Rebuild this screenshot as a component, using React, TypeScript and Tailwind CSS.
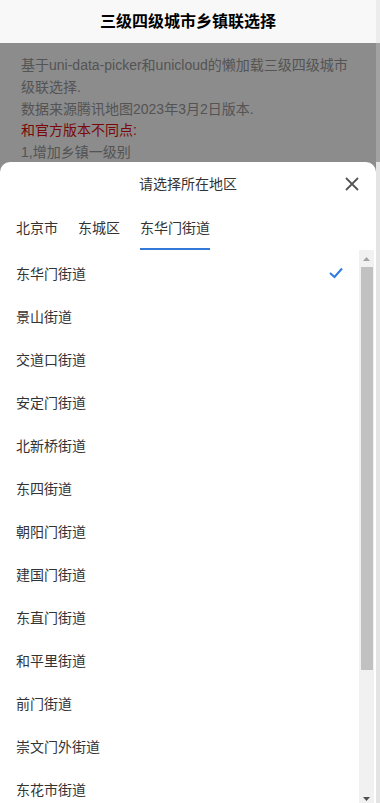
import React from "react";

const items = [
  "东华门街道",
  "景山街道",
  "交道口街道",
  "安定门街道",
  "北新桥街道",
  "东四街道",
  "朝阳门街道",
  "建国门街道",
  "东直门街道",
  "和平里街道",
  "前门街道",
  "崇文门外街道",
  "东花市街道",
];

const font = { fontFamily: '"Liberation Sans", "Noto Sans CJK SC", sans-serif' };

export default function App() {
  return (
    <div className="w-[380px] h-[803px] overflow-hidden flex bg-white" style={font}>
      <div className="w-[376px] h-full flex flex-col">
        <div className="h-[43px] shrink-0 bg-[#f8f8f8] flex items-center justify-center text-[16px] font-bold text-black">
          三级四级城市乡镇联选择
        </div>
        <div className="relative flex-1">
          <div className="pt-[12px] px-[21px] text-[14px] leading-[21.75px] text-[#999]">
            <div className="whitespace-nowrap">基于uni-data-picker和unicloud的懒加载三级四级城市</div>
            <div>级联选择.</div>
            <div>数据来源腾讯地图2023年3月2日版本.</div>
            <div className="text-[#e01010]">和官方版本不同点:</div>
            <div>1,增加乡镇一级别</div>
            <div>2,支持三级和四级选择</div>
          </div>
          <div className="absolute inset-0 bg-black/[0.45]" />
          <div className="absolute top-[119px] left-0 right-0 bottom-0 bg-white rounded-t-[10px] flex flex-col overflow-hidden">
            <div className="h-[44px] shrink-0 relative flex items-center justify-center text-[14px] text-[#333]">
              请选择所在地区
              <svg className="absolute right-[17px] top-[15px]" width="14" height="14" viewBox="0 0 14 14">
                <path d="M1 1 L13 13 M13 1 L1 13" stroke="#555" strokeWidth="1.8" fill="none" />
              </svg>
            </div>
            <div className="flex px-[6px] shrink-0">
              <div className="mx-[10px] pt-[12px] pb-[12px] text-[14px] leading-[20px] text-[#333]">北京市</div>
              <div className="mx-[10px] pt-[12px] pb-[12px] text-[14px] leading-[20px] text-[#333]">东城区</div>
              <div className="mx-[10px] pt-[12px] pb-[10px] text-[14px] leading-[20px] text-[#333] border-b-2 border-[#3579d8]">东华门街道</div>
            </div>
            <div className="flex flex-1 min-h-0 pr-[2px]">
              <div className="flex-1 flex flex-col pt-[3px]">
                {items.map((it, i) => (
                  <div key={it} className="h-[43px] shrink-0 flex items-center justify-between pl-[16px] pr-[16px] text-[14px] text-[#333]">
                    <span>{it}</span>
                    {i === 0 && (
                      <svg width="14" height="12" viewBox="0 0 14 12" className="-mt-[3px]">
                        <path d="M1 6 L5.5 10 L13 1.5" stroke="#2f7be0" strokeWidth="2" fill="none" />
                      </svg>
                    )}
                  </div>
                ))}
              </div>
              <div className="w-[15px] shrink-0 bg-[#f1f1f1] flex flex-col">
                <div className="h-[17px] flex items-center justify-center">
                  <svg width="7" height="4" viewBox="0 0 7 4">
                    <path d="M0 4 L3.5 0 L7 4 Z" fill="#a3a3a3" />
                  </svg>
                </div>
                <div className="h-[403px] ml-[2px] mr-[1px] bg-[#c1c1c1]" />
                <div className="flex-1" />
                <div className="h-[17px] flex items-start justify-center pt-[11px]">
                  <svg width="7" height="4" viewBox="0 0 7 4">
                    <path d="M0 0 L7 0 L3.5 4 Z" fill="#505050" />
                  </svg>
                </div>
              </div>
            </div>
          </div>
        </div>
      </div>
      <div className="w-[4px] h-full flex flex-col">
        <div className="h-[43px] bg-[#ececec]" />
        <div className="h-[119px] bg-[#a2a2a2]" />
        <div className="flex-1 bg-[#e4e4e4]" />
      </div>
    </div>
  );
}
